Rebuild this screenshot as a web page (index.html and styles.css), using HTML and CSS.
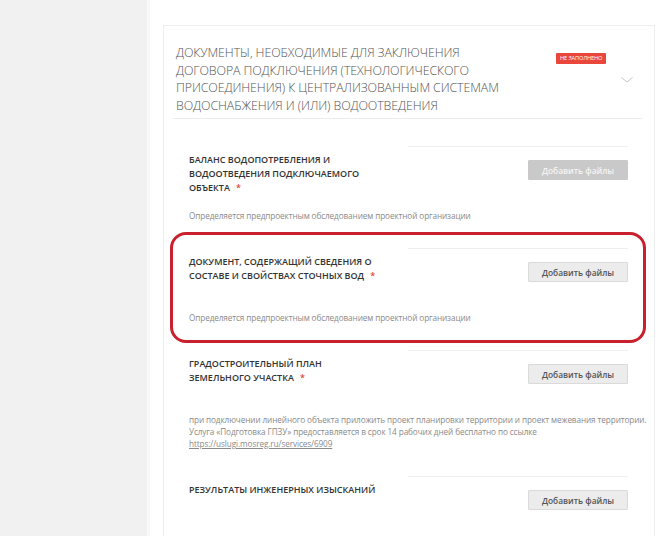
FILE: index.html
```
<!DOCTYPE html>
<html lang="ru">
<head>
<meta charset="utf-8">
<title>Документы</title>
<link rel="stylesheet" href="styles.css">
</head>
<body>
<div class="page">
  <aside class="sidebar"></aside>
  <main class="main">
    <section class="card">
      <header class="card-head">
        <h2 class="card-title">Документы, необходимые для заключения договора подключения (технологического присоединения) к централизованным системам водоснабжения и (или) водоотведения</h2>
        <div class="card-status">
          <span class="badge">Не заполнено</span>
          <svg class="chevron" width="12" height="6" viewBox="0 0 12 6"><path d="M0.5 0.5 L6 5 L11.5 0.5" fill="none" stroke="#c4c4c4" stroke-width="1"/></svg>
        </div>
      </header>

      <div class="docs">
        <div class="doc">
          <div class="doc-row">
            <div class="doc-title">Баланс водопотребления и водоотведения подключаемого объекта<span class="req">*</span></div>
            <div class="doc-side"><button class="btn btn-disabled">Добавить файлы</button></div>
          </div>
          <p class="doc-desc">Определяется предпроектным обследованием проектной организации</p>
        </div>

        <div class="doc doc-marked">
          <div class="doc-row">
            <div class="doc-title">Документ, содержащий сведения о составе и свойствах сточных вод<span class="req">*</span></div>
            <div class="doc-side"><button class="btn">Добавить файлы</button></div>
          </div>
          <p class="doc-desc">Определяется предпроектным обследованием проектной организации</p>
        </div>

        <div class="doc">
          <div class="doc-row">
            <div class="doc-title">Градостроительный план земельного участка<span class="req">*</span></div>
            <div class="doc-side"><button class="btn">Добавить файлы</button></div>
          </div>
          <p class="doc-desc doc-desc-wide">при подключении линейного объекта приложить проект планировки территории и проект межевания территории.<br>Услуга «Подготовка ГПЗУ» предоставляется в срок 14 рабочих дней бесплатно по ссылке <a href="#" class="link">https://uslugi.mosreg.ru/services/6909</a></p>
        </div>

        <div class="doc">
          <div class="doc-row">
            <div class="doc-title">Результаты инженерных изысканий</div>
            <div class="doc-side"><button class="btn">Добавить файлы</button></div>
          </div>
        </div>
      </div>
    </section>
  </main>
</div>
</body>
</html>
```
FILE: styles.css
```
* { box-sizing: border-box; }
html, body { margin: 0; padding: 0; height: 100%; overflow: hidden; background: #fff; }
body { font-family: "Open Sans", "Liberation Sans", sans-serif; color: #333; }

.page { display: flex; height: 536px; }
.sidebar { width: 150px; flex: 0 0 150px; background: #f1f1f1; border-right: 3px solid #f8f8f8; }
.main { flex: 1; padding: 25px 7px 0 13px; }

.card { border: 1px solid #ededed; min-height: 560px; }

.card-head {
  display: flex;
  margin: 0 12px 0 9px;
  padding: 18px 9px 4px 3px;
  border-bottom: 1px solid #ececec;
}
.card-title {
  margin: 0;
  width: 350px;
  font-size: 12.4px;
  line-height: 17.5px;
  font-weight: 300;
  color: #555;
  text-transform: uppercase;
  letter-spacing: -0.1px;
}
.card-status {
  flex: 1;
  display: flex;
  flex-direction: column;
  align-items: flex-end;
  padding-top: 9px;
}
.badge {
  align-self: flex-start;
  margin-left: 30px;
  background: #e9473b;
  color: #fff;
  font-size: 5.6px;
  line-height: 11px;
  height: 11px;
  padding: 0 4px;
  text-transform: uppercase;
  border-radius: 1px;
  letter-spacing: -0.1px;
}
.chevron { display: block; margin-top: 13px; }

.docs { padding-top: 27px; }
.doc { position: relative; padding: 0 26px 0 25px; }
.doc-row { display: flex; min-height: 64px; }
.doc-title {
  width: 219px;
  flex: 0 0 219px;
  padding: 7px 28px 0 0;
  font-size: 9px;
  line-height: 14px;
  font-weight: 600;
  color: #333;
  text-transform: uppercase;
}
.req { color: #e0463c; margin-left: 6px; }
.doc-side {
  flex: 1;
  border-top: 1px solid #efefef;
  display: flex;
  justify-content: flex-end;
  align-items: flex-start;
  padding-top: 13px;
}
.btn {
  width: 100px;
  height: 20px;
  padding: 0;
  border: 1px solid #dadada;
  background: #ececec;
  color: #555;
  font-family: "Open Sans", "Liberation Sans", sans-serif;
  font-size: 8.4px;
  font-weight: 600;
  border-radius: 1px;
}
.btn-disabled { background: #c9c9c9; border-color: #c9c9c9; color: #f4f4f4; }

.doc-desc {
  margin: 0;
  padding-bottom: 26px;
  font-size: 8.2px;
  line-height: 12px;
  color: #8a8a8a;
  letter-spacing: -0.1px;
}
.doc-desc-wide { margin-right: -40px; }
.link { color: #8a8a8a; text-decoration: underline; }

.doc-marked::after {
  content: "";
  position: absolute;
  left: 6px;
  right: 8px;
  top: -16px;
  bottom: 7px;
  border: 3px solid #c8202d;
  border-radius: 16px;
  pointer-events: none;
}
```
